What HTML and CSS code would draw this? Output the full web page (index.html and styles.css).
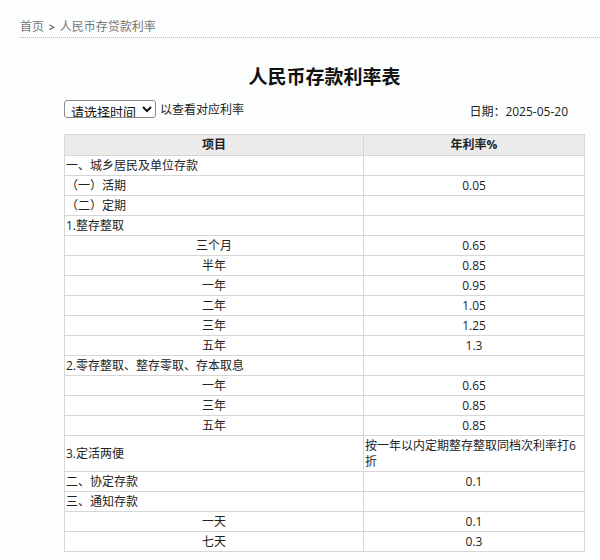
FILE: index.html
```html
<!DOCTYPE html>
<html lang="zh-CN">
<head>
<meta charset="utf-8">
<title>人民币存款利率表</title>
<link rel="stylesheet" href="styles.css">
</head>
<body>
<div class="crumbs">
  <a class="crumb-link">首页</a><span class="crumb-sep">&gt;</span><a class="crumb-link">人民币存贷款利率</a>
</div>
<div class="main">
  <h1 class="title">人民币存款利率表</h1>
  <div class="toolbar">
    <div class="picker">
      <select class="time-select">
        <option>请选择时间</option>
      </select>
      <span class="hint">以查看对应利率</span>
    </div>
    <div class="date">日期：2025-05-20</div>
  </div>
  <table class="rates">
    <thead>
      <tr><th class="c-item">项目</th><th class="c-rate">年利率%</th></tr>
    </thead>
    <tbody>
      <tr><td>一、城乡居民及单位存款</td><td class="num"></td></tr>
      <tr><td>（一）活期</td><td class="num">0.05</td></tr>
      <tr><td>（二）定期</td><td class="num"></td></tr>
      <tr><td>1.整存整取</td><td class="num"></td></tr>
      <tr><td class="sub">三个月</td><td class="num">0.65</td></tr>
      <tr><td class="sub">半年</td><td class="num">0.85</td></tr>
      <tr><td class="sub">一年</td><td class="num">0.95</td></tr>
      <tr><td class="sub">二年</td><td class="num">1.05</td></tr>
      <tr><td class="sub">三年</td><td class="num">1.25</td></tr>
      <tr><td class="sub">五年</td><td class="num">1.3</td></tr>
      <tr><td>2.零存整取、整存零取、存本取息</td><td class="num"></td></tr>
      <tr><td class="sub">一年</td><td class="num">0.65</td></tr>
      <tr><td class="sub">三年</td><td class="num">0.85</td></tr>
      <tr><td class="sub">五年</td><td class="num">0.85</td></tr>
      <tr><td>3.定活两便</td><td class="note">按一年以内定期整存整取同档次利率打6折</td></tr>
      <tr><td>二、协定存款</td><td class="num">0.1</td></tr>
      <tr><td>三、通知存款</td><td class="num"></td></tr>
      <tr><td class="sub">一天</td><td class="num">0.1</td></tr>
      <tr><td class="sub">七天</td><td class="num">0.3</td></tr>
    </tbody>
  </table>
</div>
</body>
</html>
```
FILE: styles.css
```css
html, body {
  margin: 0;
  padding: 0;
  background: #fcfdfd;
}
body {
  font-family: "Open Sans", "Noto Sans CJK SC", sans-serif;
  font-size: 12px;
  color: #222;
  width: 600px;
  height: 560px;
  overflow: hidden;
}
.crumbs {
  margin: 19px 0 0 20px;
  padding-bottom: 2px;
  line-height: 16px;
  border-bottom: 1px dotted #b8b8b8;
  color: #777;
  font-size: 12px;
}
.crumb-link {
  color: #777;
  text-decoration: none;
}
.crumb-sep {
  display: inline-block;
  margin: 0 5px;
  font-weight: bold;
  font-size: 10px;
  color: #666;
}
.main {
  margin-left: 64px;
  width: 521px;
}
.title {
  margin: 26px 0 0;
  text-align: center;
  font-size: 19px;
  line-height: 26px;
  font-weight: bold;
  color: #111;
}
.toolbar {
  display: flex;
  justify-content: space-between;
  align-items: center;
  margin-top: 8px;
  height: 22px;
  padding-right: 17px;
}
.picker {
  display: flex;
  align-items: center;
  gap: 4px;
}
.time-select {
  font-family: "Noto Sans CJK SC", sans-serif;
  font-size: 13px;
  height: 18px;
  width: 92px;
  padding: 0 0 0 2px;
  margin: 0;
  border: 1px solid #8a8a8a;
  border-radius: 3px;
  background: #fff;
  color: #111;
  line-height: 16px;
}
.hint {
  font-size: 12px;
  color: #222;
}
.date {
  font-size: 12px;
  color: #222;
  margin-top: 4px;
}
.rates {
  margin-top: 14px;
  width: 521px;
  border-collapse: collapse;
  table-layout: fixed;
  background: #fff;
}
.rates th, .rates td {
  border: 1px solid #d6d6d6;
  padding: 2px 1px 1px;
  line-height: 16px;
  font-size: 12px;
  vertical-align: middle;
}
.rates th {
  background: #ebebeb;
  font-weight: bold;
  text-align: center;
  padding: 2px 1px 2px;
  color: #222;
}
.c-item { width: 296px; }
.rates td.sub, .rates td.num { text-align: center; }
.rates td.note { text-align: left; }
```
